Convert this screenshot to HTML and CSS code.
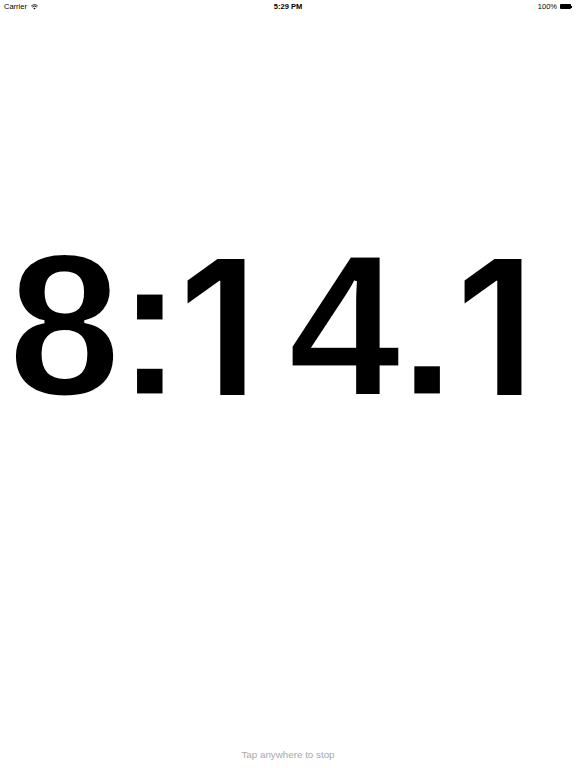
FILE: index.html
```html
<!DOCTYPE html>
<html>
<head>
<meta charset="utf-8">
<link rel="stylesheet" href="styles.css">
</head>
<body>
<div class="screen">
  <div class="status">
    <div class="left">Carrier
      <svg class="wifi" viewBox="0 0 10 8"><path d="M5 7.6 L3.4 5.8 A2.4 2.4 0 0 1 6.6 5.8 Z" fill="#000"/><path d="M1.8 4.2 A4.6 4.6 0 0 1 8.2 4.2" stroke="#000" stroke-width="1.2" fill="none"/><path d="M0.4 2.6 A6.6 6.6 0 0 1 9.6 2.6" stroke="#000" stroke-width="1.2" fill="none"/></svg>
    </div>
    <div class="time">5:29 PM</div>
    <div class="right">100%
      <span class="battery"></span><span class="nub"></span>
    </div>
  </div>
  <div class="main">
    <div class="clock"><span class="eight">8</span><span class="colon">:</span><span class="d one">1</span><span class="d">4</span><span class="p">.</span><span class="d one">1</span></div>
  </div>
  <div class="hint">Tap anywhere to stop</div>
</div>
</body>
</html>
```
FILE: styles.css
```css
html, body { margin: 0; padding: 0; background: #fff; }
.screen {
  width: 576px; height: 768px;
  display: flex; flex-direction: column;
  font-family: "Liberation Sans", Arial, sans-serif;
}
.status {
  height: 13px;
  display: grid; grid-template-columns: 1fr auto 1fr;
  align-items: center;
  font-size: 7.5px;
  color: #000;
  padding: 0 4px;
}
.left { display: flex; align-items: center; gap: 4px; }
.wifi { width: 7px; height: 6px; }
.time { font-weight: bold; }
.right { display: flex; align-items: center; justify-content: flex-end; gap: 3px; }
.battery {
  width: 11px; height: 5px; background: #000; border-radius: 1px; display: inline-block;
}
.nub { width: 1px; height: 2px; background: #000; margin-left: -3px; }
.main { flex: 1; display: flex; align-items: flex-start; }
.clock {
  margin-top: 197px;
  padding-left: 8px;
  display: flex;
  align-items: baseline;
  font-size: 203px;
  font-weight: bold;
  line-height: 230px;
  color: #000;
  -webkit-text-stroke: 3px #fff;
}
.eight { width: 108px; text-align: left; letter-spacing: -8px; }
.colon { width: 61px; text-align: left; letter-spacing: -12.6px; }
.d { width: 111px; text-align: center; letter-spacing: -2px; }
.p { width: 55px; text-align: center; letter-spacing: -1.5px; }
.one {
  font-family: "Inter", "Liberation Sans", sans-serif;
  font-weight: 600;
  font-size: 187px;
  letter-spacing: 0;
  -webkit-text-stroke: 0;
  text-align: left;
  padding-left: 2px;
  box-sizing: border-box;
}
.hint {
  text-align: center;
  font-size: 9.8px;
  color: #a8a8a8;
  padding-bottom: 8px;
}
```
